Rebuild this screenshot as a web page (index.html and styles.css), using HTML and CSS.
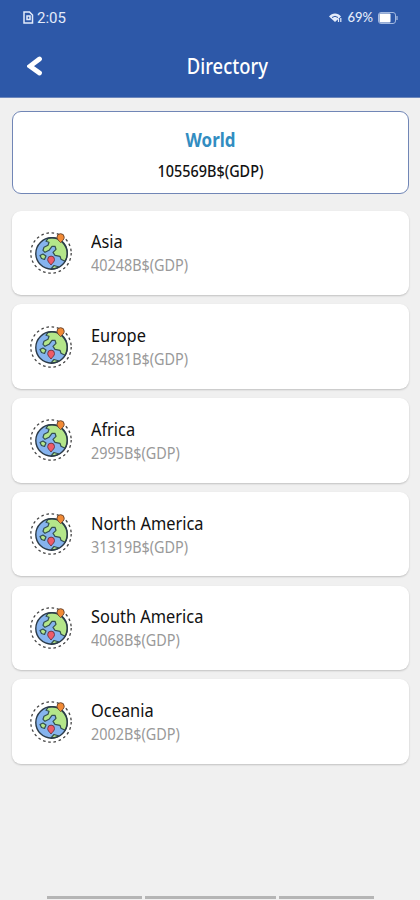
FILE: index.html
```
<!DOCTYPE html>
<html lang="en">
<head>
<meta charset="utf-8">
<title>Directory</title>
<link rel="stylesheet" href="styles.css">
</head>
<body>
<svg class="defs" width="0" height="0" aria-hidden="true">
  <symbol id="globe" viewBox="0 0 44 44">
    <circle cx="22" cy="22" r="20.2" fill="none" stroke="#444" stroke-width="1.3" stroke-dasharray="2.600 2.688"/>
    <circle cx="22.500" cy="22.500" r="15.700" fill="#86b4ee"/>
    <g fill="#b4e68a" stroke="#33504f" stroke-width="1.200" stroke-linejoin="round">
      <path d="M19 7.300c9-2.500 17 3 19 11 1 5 0 9-2 12l-4-2-1-3-5-1-2-3 3-3-1-3-3 0-3 4-4 2-2-2 1-3 4-2 1-3-3-1z"/>
      <path d="M11 24.500l3-1.500 3 2-1.500 3.500-3-1zM22 37.800l3-3.300 5 1.500c-2 1.500-5 2.200-8 1.800z"/>
    </g>
    <circle cx="22.500" cy="22.500" r="15.700" fill="none" stroke="#2c3b48" stroke-width="1.400"/>
    <path d="M22 34c-2-2.500-3.300-3.300-3.300-5.500a3.400 3.400 0 0 1 6.800 0c0 2.200-1.600 3-3.500 5.500z" fill="#ef5b68" stroke="#633344" stroke-width=".9"/>
    <path d="M31.500 11.500c-1.500-1.500-3.500-3-3.500-5.200a3.600 3.600 0 0 1 7.200 0c0 2.200-2 3.700-3.700 5.200z" fill="#f28a35" stroke="#70482e" stroke-width="1"/>
  </symbol>
</svg>
<header class="top">
  <div class="status">
    <div class="clock">
      <svg width="11" height="13" viewBox="0 0 11 13" fill="none" stroke="#e3ebfa" stroke-width="1.500"><path d="M1 1h5.500l3 3v8H1zM4 5h3v3.500H4z"/></svg>
      <span class="time">2:05</span>
    </div>
    <div class="power">
      <svg class="wifi" width="13" height="10" viewBox="0 0 13 10"><path d="M0 3.500C3-.5 9-.5 12 3.500L6 9z" fill="#e3ebfa"/><path d="M3 4.500q3-2.500 6 0" fill="none" stroke="#2d58a8" stroke-width="1"/><path d="M9.500 9V6M11.800 9V5" stroke="#e3ebfa" stroke-width="1.200"/></svg>
      <span class="percent">69%</span>
      <svg width="20" height="12" viewBox="0 0 20 12"><rect x=".5" y=".5" width="17" height="11" rx="2.500" fill="none" stroke="#a3b9e0"/><rect x="1.500" y="1.500" width="11" height="9" rx="1" fill="#fff"/><path d="M19 4v4" stroke="#a3b9e0" stroke-width="1.300"/></svg>
    </div>
  </div>
  <div class="bar">
    <svg class="back" width="16" height="20" viewBox="0 0 16 20"><path d="M12.500 3L3 10.200l9.500 6.800" fill="none" stroke="#fff" stroke-width="4.800" stroke-linecap="round"/></svg>
    <h1><span>Directory</span></h1>
  </div>
</header>
<main>
  <section class="world"><h2>World</h2><p>105569B$(GDP)</p></section>
  <div class="list">
    <article class="card"><svg class="globe"><use href="#globe"/></svg><div><h3>Asia</h3><p>40248B$(GDP)</p></div></article>
    <article class="card"><svg class="globe"><use href="#globe"/></svg><div><h3>Europe</h3><p>24881B$(GDP)</p></div></article>
    <article class="card"><svg class="globe"><use href="#globe"/></svg><div><h3>Africa</h3><p>2995B$(GDP)</p></div></article>
    <article class="card"><svg class="globe"><use href="#globe"/></svg><div><h3>North America</h3><p>31319B$(GDP)</p></div></article>
    <article class="card"><svg class="globe"><use href="#globe"/></svg><div><h3>South America</h3><p>4068B$(GDP)</p></div></article>
    <article class="card"><svg class="globe"><use href="#globe"/></svg><div><h3>Oceania</h3><p>2002B$(GDP)</p></div></article>
  </div>
</main>
<footer class="nav"><i></i><i></i><i></i></footer>
</body>
</html>
```
FILE: styles.css
```
* { box-sizing: border-box; }
body {
  margin: 0;
  height: 900px;
  display: flex;
  flex-direction: column;
  overflow: hidden;
  background: #f0f0f0;
  color: #111;
  font-family: "Noto Sans", sans-serif;
}
h1, h2, h3, p { margin: 0; white-space: nowrap; }
svg { display: block; flex: none; }
.defs { position: absolute; }
.top { height: 98px; flex: none; background: #2d58a8; border-bottom: 1px solid #6d87bc; color: #fff; }
.status { height: 35px; display: flex; justify-content: space-between; padding: 0 22px 0 23px; }
.clock, .power { display: flex; align-items: center; color: #e3ebfa; }
.clock { gap: 3px; }
.time { font: 400 15px/20px Roboto, sans-serif; }
.percent { font: 500 13px/18px Lato, sans-serif; margin: 0 5px 0 4px; position: relative; top: -1px; }
.wifi { position: relative; left: -1px; }
.bar { height: 62px; display: grid; grid-template-columns: 44px 1fr 10px; align-items: center; }
.back { justify-self: start; margin-left: 27px; }
h1 { text-align: center; font-size: 21px; line-height: 28px; font-weight: 500; }
h1 span { display: inline-block; transform: scaleX(.875); }
main { padding: 13px 11px 0 12px; }
.world {
  height: 83px;
  border: 1px solid #7186b6;
  border-radius: 9px;
  background: #fff;
  text-align: center;
  padding-top: 15px;
}
.world h2 { color: #328dc1; font-size: 19px; line-height: 26px; font-weight: 700; transform: scaleX(.89); }
.world p { font-size: 16px; line-height: 20px; font-weight: 500; margin-top: 8px; transform: scaleX(.9); }
.list { display: grid; gap: 9.3px; margin-top: 16.500px; }
.card {
  height: 84.500px;
  border-radius: 9px;
  background: #fff;
  box-shadow: 0 1px 2px #0003;
  display: flex;
  align-items: center;
  padding-left: 17px;
}
.globe { width: 44px; height: 44px; margin-right: 17.600px; }
.card h3 { font-size: 18px; line-height: 24px; font-weight: 400; transform: scaleX(.91); transform-origin: left; padding-top: 1px; }
.card p { font-size: 16px; line-height: 23px; color: #999; transform: scaleX(.9); transform-origin: left; padding-top: 1px; }
.nav { margin-top: auto; height: 4px; padding: 0 46px 0 47px; display: grid; grid-template-columns: 95fr 132fr 95fr; gap: 3px; }
.nav i { height: 2.500px; background: #b5b5b5; }
```
